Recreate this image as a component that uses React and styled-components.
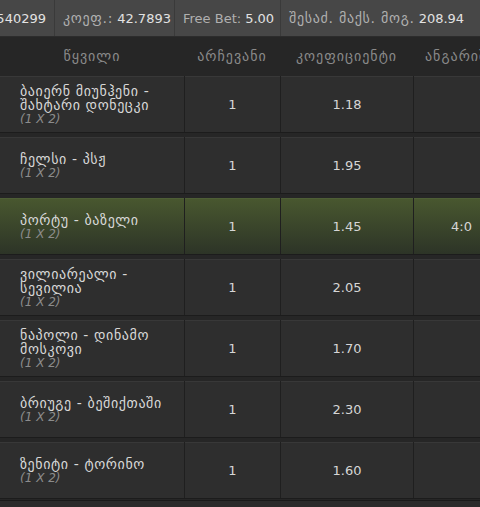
import React from "react";
import styled, { createGlobalStyle } from "styled-components";

const GlobalStyle = createGlobalStyle`
  html, body {
    margin: 0;
    padding: 0;
    background: #262626;
    overflow: hidden;
  }
  body {
    font-family: "DejaVu Sans", "Noto Sans", sans-serif;
  }
`;

const rows = [
  { teams: ["ბაიერნ მიუნჰენი -", "შახტარი დონეცკი"], pick: "1", odd: "1.18", score: "" },
  { teams: ["ჩელსი - პსჟ"], pick: "1", odd: "1.95", score: "" },
  { teams: ["პორტუ - ბაზელი"], pick: "1", odd: "1.45", score: "4:0", active: true },
  { teams: ["ვილიარეალი -", "სევილია"], pick: "1", odd: "2.05", score: "" },
  { teams: ["ნაპოლი - დინამო", "მოსკოვი"], pick: "1", odd: "1.70", score: "" },
  { teams: ["ბრიუგე - ბეშიქთაში"], pick: "1", odd: "2.30", score: "" },
  { teams: ["ზენიტი - ტორინო"], pick: "1", odd: "1.60", score: "" },
];

const App = () => {
  return (
    <Page>
      <GlobalStyle />
      <InfoBar>
        <InfoCell $width="55px" $align="right">
          <Value>540299</Value>
        </InfoCell>
        <InfoCell $width="120px">
          <Label $ka>კოეფ.:</Label> <Value>42.7893</Value>
        </InfoCell>
        <InfoCell $width="106px">
          <Label>Free Bet:</Label> <Value>5.00</Value>
        </InfoCell>
        <InfoCell $grow>
          <Label $ka>შესაძ. მაქს. მოგ.</Label> <Value>208.94</Value>
        </InfoCell>
      </InfoBar>

      <HeaderRow>
        <HeadCell>წყვილი</HeadCell>
        <HeadCell>არჩევანი</HeadCell>
        <HeadCell>კოეფიციენტი</HeadCell>
        <HeadCell $left>ანგარიში</HeadCell>
      </HeaderRow>

      <Body>
        {rows.map((r, i) => (
          <Row key={i}>
            <Cell $active={r.active} $pad>
              <Teams>
                {r.teams.map((t, j) => (
                  <TeamLine key={j}>{t}</TeamLine>
                ))}
                <Market>(1 X 2)</Market>
              </Teams>
            </Cell>
            <Cell $active={r.active} $center>{r.pick}</Cell>
            <Cell $active={r.active} $center>{r.odd}</Cell>
            <Cell $active={r.active} $right>{r.score}</Cell>
          </Row>
        ))}
      </Body>
      <Footer />
    </Page>
  );
};

const Page = styled.div`
  width: 480px;
  height: 507px;
  overflow: hidden;
  background: #262626;
`;

const InfoBar = styled.div`
  display: flex;
  height: 36px;
  background: #474747;
  border-bottom: 1px solid #2c2c2c;
  box-sizing: content-box;
`;

const InfoCell = styled.div`
  flex: ${({ $grow }) => ($grow ? "1" : "none")};
  width: ${({ $width }) => $width || "auto"};
  display: flex;
  align-items: center;
  justify-content: ${({ $align }) => ($align === "right" ? "flex-end" : "flex-start")};
  gap: 4px;
  padding: 0 8px;
  box-sizing: border-box;
  border-right: 1px solid #3a3a3a;
  font-size: 13px;
  white-space: nowrap;
  overflow: hidden;

  &:last-child {
    border-right: none;
  }
`;

const Label = styled.span`
  color: #b0b0b0;
  font-size: ${({ $ka }) => ($ka ? "14px" : "13px")};
  letter-spacing: ${({ $ka }) => ($ka ? "0.7px" : "0")};
`;

const Value = styled.span`
  color: #e2e2e2;
`;

const HeaderRow = styled.div`
  display: grid;
  grid-template-columns: 184px 96px 133px 1fr;
  height: 38px;
  align-items: center;
  background: #262626;
`;

const HeadCell = styled.div`
  color: #8a8a8a;
  font-size: 14px;
  letter-spacing: 1px;
  text-align: ${({ $left }) => ($left ? "left" : "center")};
  padding-left: ${({ $left }) => ($left ? "12px" : "0")};
  white-space: nowrap;
  overflow: hidden;
`;

const Body = styled.div`
  display: flex;
  flex-direction: column;
  gap: 4px;
  padding-top: 1px;
`;

const Row = styled.div`
  display: grid;
  grid-template-columns: 184px 95px 132px 1fr;
  column-gap: 1px;
  height: 57px;
  background: #1f1f1f;
  border-bottom: 1px solid #1c1c1c;
  box-sizing: border-box;
`;

const Cell = styled.div`
  display: flex;
  align-items: center;
  justify-content: ${({ $center, $right }) =>
    $center ? "center" : $right ? "flex-end" : "flex-start"};
  padding: ${({ $pad, $right }) => ($pad ? "0 0 0 20px" : $right ? "0 8px 0 0" : "0")};
  background: ${({ $active }) =>
    $active ? "linear-gradient(#48572f, #2d3427)" : "#2e2e2e"};
  border-top: 1px solid ${({ $active }) => ($active ? "#4e5e36" : "#383838")};
  color: #d6d6d6;
  font-size: 13px;
`;

const Teams = styled.div`
  display: flex;
  flex-direction: column;
  line-height: 14px;
`;

const TeamLine = styled.span`
  font-size: 14px;
  letter-spacing: 0.6px;
  color: #d8d8d8;
`;

const Market = styled.span`
  color: #8c8c8c;
  font-style: italic;
  font-size: 12px;
`;

const Footer = styled.div`
  height: 8px;
  margin-top: 1px;
  border-top: 1px solid #1a1a1a;
  background: #2b2b2b;
`;

export default App;
